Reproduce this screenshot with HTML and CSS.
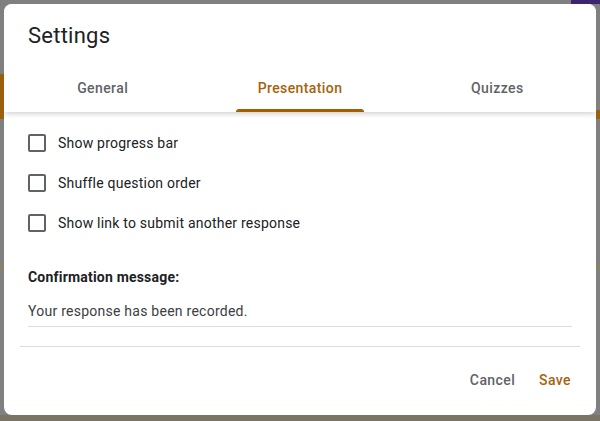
FILE: index.html
```html
<!DOCTYPE html>
<html>
<head>
<meta charset="utf-8">
<link rel="stylesheet" href="styles.css">
</head>
<body>
<div class="dialog">
  <div class="header">
    <div class="title">Settings</div>
    <div class="tabs">
      <div class="tab">General</div>
      <div class="tab active">Presentation</div>
      <div class="tab">Quizzes</div>
    </div>
  </div>
  <div class="content">
    <label class="row"><span class="box"></span><span class="label">Show progress bar</span></label>
    <label class="row"><span class="box"></span><span class="label">Shuffle question order</span></label>
    <label class="row"><span class="box"></span><span class="label">Show link to submit another response</span></label>
    <div class="section-title">Confirmation message:</div>
    <div class="input">Your response has been recorded.</div>
  </div>
  <div class="divider"></div>
  <div class="footer">
    <button class="btn cancel">Cancel</button>
    <button class="btn save">Save</button>
  </div>
</div>
</body>
</html>
```
FILE: styles.css
```css
* { box-sizing: border-box; }
html, body { margin: 0; }
body {
  width: 600px;
  height: 421px;
  overflow: hidden;
  font-family: Roboto, "Liberation Sans", sans-serif;
  background:
    linear-gradient(#3d2470, #3d2470) 571px 0 / 29px 4px no-repeat,
    linear-gradient(#9c600c, #9c600c) 0 74px / 4px 45px no-repeat,
    linear-gradient(#9c600c, #9c600c) 596px 110px / 4px 9px no-repeat,
    linear-gradient(#8a806e, #8a806e) 0 263px / 600px 7px no-repeat,
    linear-gradient(#7a7466, #7a7466) 0 415px / 600px 6px no-repeat,
    #808080;
  padding: 4px;
}
.dialog {
  width: 592px;
  height: 411px;
  background: #fff;
  border-radius: 8px;
  overflow: hidden;
  display: flex;
  flex-direction: column;
}
.header {
  position: relative;
  z-index: 1;
  background: #fff;
  box-shadow: 0 3px 5px -1px rgba(0, 0, 0, 0.18);
}
.title {
  padding: 16px 24px 0;
  font-size: 22px;
  line-height: 32px;
  color: #202124;
  font-weight: 400;
  letter-spacing: 0.25px;
}
.tabs {
  margin-top: 12px;
  height: 48px;
  display: grid;
  grid-template-columns: 1fr 1fr 1fr;
}
.tab {
  position: relative;
  display: flex;
  align-items: center;
  justify-content: center;
  font-size: 14px;
  font-weight: 500;
  color: #5f6368;
  letter-spacing: 0.4px;
}
.tab.active { color: #a8620a; }
.tab.active::after {
  content: "";
  position: absolute;
  bottom: 0;
  left: 50%;
  width: 128px;
  margin-left: -64px;
  height: 3px;
  border-radius: 3px 3px 0 0;
  background: #a65f00;
}
.content {
  padding: 11px 24px 0;
}
.row {
  height: 40px;
  display: flex;
  align-items: center;
  gap: 12px;
}
.box {
  width: 18px;
  height: 18px;
  border: 2px solid #5f6368;
  border-radius: 2px;
  flex: none;
}
.label {
  font-size: 14px;
  color: #202124;
  letter-spacing: 0.22px;
}
.section-title {
  margin-top: 24px;
  font-size: 14px;
  line-height: 20px;
  font-weight: 700;
  color: #202124;
  letter-spacing: 0.2px;
}
.input {
  margin-top: 14px;
  font-size: 14px;
  line-height: 20px;
  padding-bottom: 5px;
  border-bottom: 1px solid #dadce0;
  color: #3c4043;
  letter-spacing: 0.25px;
}
.divider {
  margin: 19px 16px 0;
  border-top: 1px solid #dadce0;
}
.footer {
  display: flex;
  justify-content: flex-end;
  gap: 8px;
  padding: 15px 17px 0 0;
}
.btn {
  height: 36px;
  padding: 0 8px;
  border: none;
  background: none;
  font-family: Roboto, "Liberation Sans", sans-serif;
  font-size: 14px;
  font-weight: 500;
  letter-spacing: 0.4px;
}
.cancel { color: #5f6368; }
.save { color: #a8620a; }
```
